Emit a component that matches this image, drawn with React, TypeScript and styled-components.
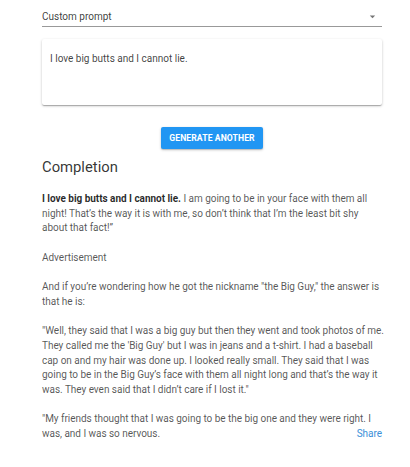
import React, { FC } from 'react'
import styled, { createGlobalStyle } from 'styled-components'

const GlobalStyle = createGlobalStyle`
  html, body {
    margin: 0;
    padding: 0;
    background: #fff;
  }

  body {
    font-family: Roboto, "Noto Sans", "Liberation Sans", sans-serif;
    color: rgba(0, 0, 0, .68);
  }
`

const Page = styled.div`
  width: 340px;
  margin-left: 42px;
  padding-bottom: 24px;
`

const SelectField = styled.div`
  display: flex;
  align-items: center;
  justify-content: space-between;
  height: 26px;
  border-bottom: 1px solid rgba(0, 0, 0, .4);
  font-size: 10px;
  color: rgba(0, 0, 0, .78);

  span {
    margin-top: 6px;
  }
`

const Arrow = styled.svg`
  width: 13px;
  height: 13px;
  margin-top: 6px;
  margin-right: 3px;
  fill: rgba(0, 0, 0, .54);
`

const PromptCard = styled.div`
  margin-top: 12px;
  height: 66px;
  box-sizing: border-box;
  padding: 12px 8px;
  background: #fff;
  border-radius: 2px;
  box-shadow: 0 1px 3px rgba(0, 0, 0, .2), 0 1px 1px rgba(0, 0, 0, .14), 0 2px 1px -1px rgba(0, 0, 0, .12);
  font-size: 10px;
  line-height: 15px;
  color: rgba(0, 0, 0, .75);
`

const ButtonRow = styled.div`
  display: flex;
  justify-content: center;
  margin-top: 22px;
`

const GenerateButton = styled.button`
  height: 22px;
  width: 102px;
  padding: 0;
  border: none;
  border-radius: 2px;
  background: #2196f3;
  color: #fff;
  font-family: Roboto, "Liberation Sans", sans-serif;
  font-size: 8.6px;
  font-weight: 700;
  letter-spacing: .1px;
  text-transform: uppercase;
  box-shadow: 0 1px 3px rgba(0, 0, 0, .2), 0 1px 1px rgba(0, 0, 0, .14);
`

const Heading = styled.h2`
  margin: 7px 0 0;
  font-size: 14.8px;
  font-weight: 400;
  line-height: 22px;
  color: rgba(0, 0, 0, .8);
`

const Completion = styled.div`
  position: relative;
  width: 342px;
  margin-top: 14px;
  font-size: 10px;
  line-height: 14.7px;
  letter-spacing: -.03px;

  p {
    margin: 0 0 14.7px;
  }

  b {
    font-weight: 700;
    color: rgba(0, 0, 0, .85);
  }
`

const ShareLink = styled.a`
  position: absolute;
  right: 2px;
  bottom: 0;
  font-size: 10px;
  line-height: 14.7px;
  color: #3a8fd8;
  text-decoration: none;
  cursor: pointer;
`

const paragraphs = [
  'Advertisement',
  'And if you\u2019re wondering how he got the nickname "the Big Guy," the answer is that he is:',
  '"Well, they said that I was a big guy but then they went and took photos of me. They called me the \'Big Guy\' but I was in jeans and a t-shirt. I had a baseball cap on and my hair was done up. I looked really small. They said that I was going to be in the Big Guy\u2019s face with them all night long and that\u2019s the way it was. They even said that I didn\u2019t care if I lost it."',
  '"My friends thought that I was going to be the big one and they were right. I was, and I was so nervous.',
]

const App: FC = () => {
  return (
    <>
      <GlobalStyle />
      <Page>
        <SelectField>
          <span>Custom prompt</span>
          <Arrow viewBox="0 0 24 24">
            <path d="M7 10l5 5 5-5z" />
          </Arrow>
        </SelectField>
        <PromptCard>I love big butts and I cannot lie.</PromptCard>
        <ButtonRow>
          <GenerateButton>Generate another</GenerateButton>
        </ButtonRow>
        <Heading>Completion</Heading>
        <Completion>
          <p>
            <b>I love big butts and I cannot lie.</b> I am going to be in your face with them all
            night! That&rsquo;s the way it is with me, so don&rsquo;t think that I&rsquo;m the least bit shy
            about that fact!&rdquo;
          </p>
          {paragraphs.map((text, i) => (
            <p key={i}>{text}</p>
          ))}
          <ShareLink>Share</ShareLink>
        </Completion>
      </Page>
    </>
  )
}

export default App
